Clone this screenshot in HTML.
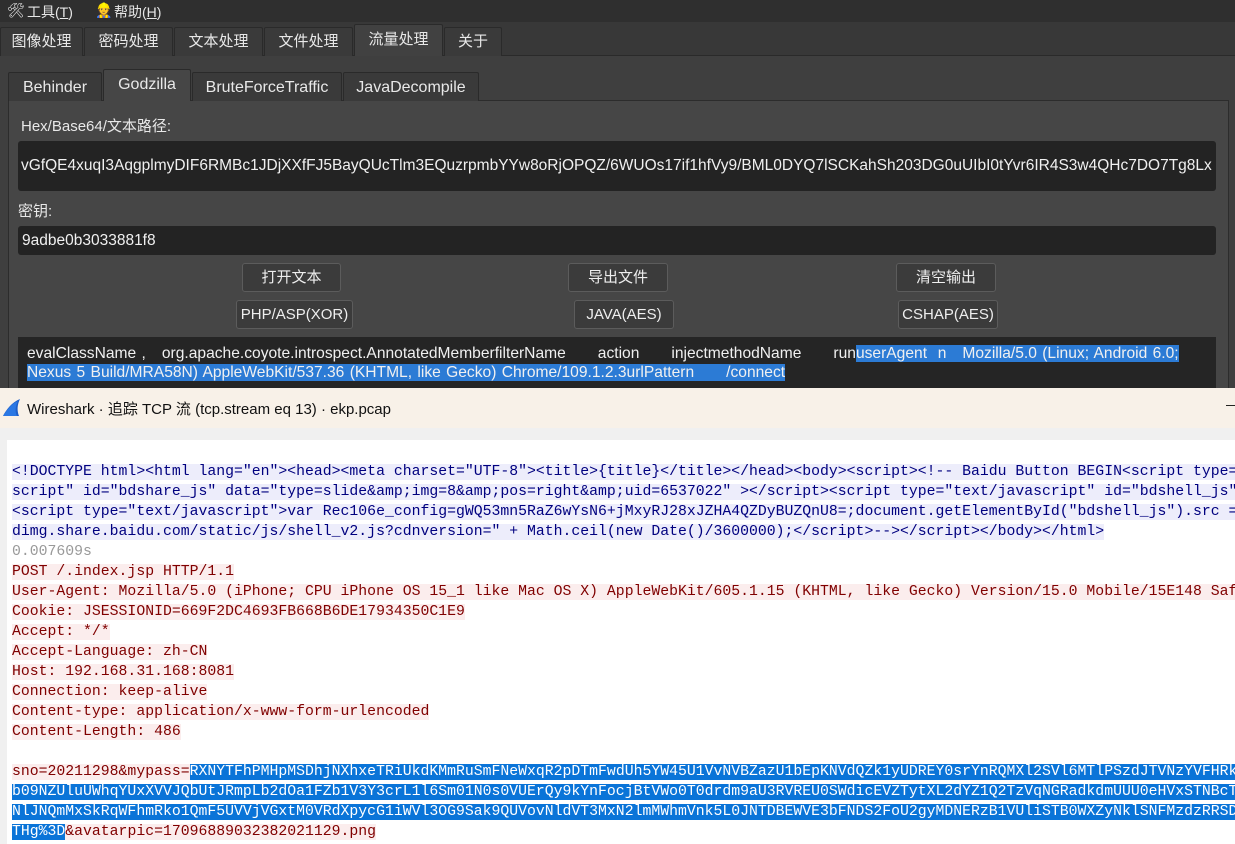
<!DOCTYPE html>
<html><head><meta charset="utf-8"><style>
*{margin:0;padding:0;box-sizing:border-box}
body{width:1235px;height:844px;overflow:hidden;position:relative;background:#fff;font-family:"Liberation Sans","Noto Sans CJK SC",sans-serif}
.abs{position:absolute}
#menu{left:0;top:0;width:1235px;height:22px;background:#2f2f2f;color:#e6e6e6;font-size:14px}
#tabs{left:0;top:22px;width:1235px;height:34px;background:#383838;border-bottom:1px solid #2a2a2a}
.tab{position:absolute;top:5px;height:29px;background:#3a3a3a;border:1px solid #2a2a2a;border-bottom:none;color:#e8e8e8;font-size:15px;text-align:center;line-height:28px;border-radius:2px 2px 0 0}
.tab.act{top:2px;height:33px;background:#414141;line-height:30px}
#content{left:0;top:56px;width:1235px;height:332px;background:#3f3f3f}
.it{position:absolute;top:72px;height:29px;background:#3a3a3a;border:1px solid #2a2a2a;border-bottom:none;color:#e8e8e8;font-size:16px;text-align:center;line-height:29px;border-radius:2px 2px 0 0}
.it.act{top:69px;height:32px;background:#464646;line-height:30px}
#panel{left:8px;top:100px;width:1221px;height:290px;background:#464646;border:1px solid #2c2c2c;border-bottom:none}
.lbl{color:#e8e8e8;font-size:15px}
.field{background:#232323;border-radius:3px;color:#f0f0f0;font-size:15.5px;white-space:nowrap;overflow:hidden}
.btn{position:absolute;height:29px;background:#3b3b3b;border:1px solid #5c5c5c;border-radius:3px;color:#eee;font-size:15px;text-align:center;line-height:27px}
.sel{background:#2c7bd5}
#ws{left:0;top:388px;width:1235px;height:456px;background:#fff}
#wt{left:0;top:0;width:1235px;height:40px;background:#f8f1e8;font-size:15px;color:#111}
#ws .strip{left:0;top:40px;width:1235px;height:12px;background:#f0f0f0}
#ws .lstrip{left:0;top:40px;width:7px;height:416px;background:#f0f0f0}
#code{left:12px;top:74px;width:1223px;height:382px;overflow:hidden;font-family:"Liberation Mono",monospace;font-size:14.8px;line-height:20px}
.c span{background:#ededfb;color:#00007f}
.s span{background:#fbeded;color:#800000}
.g{color:#999}
.s span.hl{background:#0a74d8;color:#fff}
.row{height:20px;overflow:hidden;white-space:pre}
</style></head><body>
<div id="menu" class="abs">
<span class="abs" style="left:7px;top:2px">🛠</span><span class="abs" style="left:27px;top:2px">工具(<u>T</u>)</span>
<span class="abs" style="left:95px;top:2px">👷</span><span class="abs" style="left:114px;top:2px">帮助(<u>H</u>)</span>
</div>
<div id="tabs" class="abs">
<div class="tab" style="left:0;width:83px">图像处理</div>
<div class="tab" style="left:84px;width:89px">密码处理</div>
<div class="tab" style="left:174px;width:89px">文本处理</div>
<div class="tab" style="left:264px;width:89px">文件处理</div>
<div class="tab act" style="left:354px;width:89px">流量处理</div>
<div class="tab" style="left:444px;width:58px">关于</div>
</div>
<div id="content" class="abs"></div>
<div id="panel" class="abs"></div>
<div class="it" style="left:8px;width:94px">Behinder</div>
<div class="it act" style="left:103px;width:88px">Godzilla</div>
<div class="it" style="left:192px;width:150px">BruteForceTraffic</div>
<div class="it" style="left:343px;width:136px">JavaDecompile</div>
<div class="abs lbl" style="left:21px;top:115px">Hex/Base64/文本路径:</div>
<div class="abs field" style="left:18px;top:141px;width:1198px;height:50px;line-height:50px;padding-left:3px">vGfQE4xuqI3AqgplmyDIF6RMBc1JDjXXfFJ5BayQUcTlm3EQuzrpmbYYw8oRjOPQZ/6WUOs17if1hfVy9/BML0DYQ7lSCKahSh203DG0uUIbI0tYvr6IR4S3w4QHc7DO7Tg8Lx</div>
<div class="abs lbl" style="left:18px;top:200px">密钥:</div>
<div class="abs field" style="left:18px;top:226px;width:1198px;height:29px;line-height:29px;padding-left:4px">9adbe0b3033881f8</div>
<div class="btn" style="left:242px;top:263px;width:99px">打开文本</div>
<div class="btn" style="left:568px;top:263px;width:100px">导出文件</div>
<div class="btn" style="left:896px;top:263px;width:100px">清空输出</div>
<div class="btn" style="left:236px;top:300px;width:117px">PHP/ASP(XOR)</div>
<div class="btn" style="left:574px;top:300px;width:100px">JAVA(AES)</div>
<div class="btn" style="left:898px;top:300px;width:100px">CSHAP(AES)</div>
<div class="abs field" style="left:18px;top:337px;width:1198px;height:51px;border-radius:0;background:#252525;font-size:15.6px;line-height:19px;padding:7px 0 0 9px;white-space:pre;color:#f0f0f0;word-spacing:1px">evalClassName ,   org.apache.coyote.introspect.AnnotatedMemberfilterName      action      injectmethodName      run<span class="sel">userAgent  n   Mozilla/5.0 (Linux; Android 6.0;</span>
<span class="sel">Nexus 5 Build/MRA58N) AppleWebKit/537.36 (KHTML, like Gecko) Chrome/109.1.2.3urlPattern      /connect</span></div>
<div id="ws" class="abs">
<div id="wt" class="abs">
<svg class="abs" style="left:2px;top:10px" width="19" height="19" viewBox="0 0 19 19"><path d="M1 18 C4 12 10 4 18 1 C15 7 15 13 17 18 Z" fill="#1f5fc8"/><path d="M1 18 C5 12 10 5 16 3 C13 9 13 14 15 18Z" fill="#2b78e4"/></svg>
<span class="abs" style="left:27px;top:10px">Wireshark · 追踪 TCP 流 (tcp.stream eq 13) · ekp.pcap</span>
<span class="abs" style="left:1226px;top:8px;font-size:14px">—</span>
</div>
<div class="abs strip"></div><div class="abs lstrip"></div>
<div id="code" class="abs"><div class="row c"><span>&lt;!DOCTYPE html&gt;&lt;html lang="en"&gt;&lt;head&gt;&lt;meta charset="UTF-8"&gt;&lt;title&gt;{title}&lt;/title&gt;&lt;/head&gt;&lt;body&gt;&lt;script&gt;&lt;!-- Baidu Button BEGIN&lt;script type="text/java</span></div><div class="row c"><span>script" id="bdshare_js" data="type=slide&amp;amp;img=8&amp;amp;pos=right&amp;amp;uid=6537022" &gt;&lt;/script&gt;&lt;script type="text/javascript" id="bdshell_js"&gt;&lt;/s</span></div><div class="row c"><span>&lt;script type="text/javascript"&gt;var Rec106e_config=gWQ53mn5RaZ6wYsN6+jMxyRJ28xJZHA4QZDyBUZQnU8=;document.getElementById("bdshell_js").src = "http://b</span></div><div class="row c"><span>dimg.share.baidu.com/static/js/shell_v2.js?cdnversion=" + Math.ceil(new Date()/3600000);&lt;/script&gt;--&gt;&lt;/script&gt;&lt;/body&gt;&lt;/html&gt;</span></div><div class="row g">0.007609s</div><div class="row s"><span>POST /.index.jsp HTTP/1.1</span></div><div class="row s"><span>User-Agent: Mozilla/5.0 (iPhone; CPU iPhone OS 15_1 like Mac OS X) AppleWebKit/605.1.15 (KHTML, like Gecko) Version/15.0 Mobile/15E148 Safari/604.1</span></div><div class="row s"><span>Cookie: JSESSIONID=669F2DC4693FB668B6DE17934350C1E9</span></div><div class="row s"><span>Accept: */*</span></div><div class="row s"><span>Accept-Language: zh-CN</span></div><div class="row s"><span>Host: 192.168.31.168:8081</span></div><div class="row s"><span>Connection: keep-alive</span></div><div class="row s"><span>Content-type: application/x-www-form-urlencoded</span></div><div class="row s"><span>Content-Length: 486</span></div><div class="row"></div><div class="row s"><span>sno=20211298&amp;mypass=</span><span class="hl">RXNYTFhPMHpMSDhjNXhxeTRiUkdKMmRuSmFNeWxqR2pDTmFwdUh5YW45U1VvNVBZazU1bEpKNVdQZk1yUDREY0srYnRQMXl2SVl6MTlPSzdJTVNzYVFHRk1</span></div><div class="row s"><span class="hl">b09NZUluUWhqYUxXVVJQbUtJRmpLb2dOa1FZb1V3Y3crL1l6Sm01N0s0VUErQy9kYnFocjBtVWo0T0drdm9aU3RVREU0SWdicEVZTytXL2dYZ1Q2TzVqNGRadkdmUUU0eHVxSTNBcTI</span></div><div class="row s"><span class="hl">NlJNQmMxSkRqWFhmRko1QmF5UVVjVGxtM0VRdXpycG1iWVl3OG9Sak9QUVovNldVT3MxN2lmMWhmVnk5L0JNTDBEWVE3bFNDS2FoU2gyMDNERzB1VUliSTB0WXZyNklSNFMzdzRRSDN</span></div><div class="row s"><span class="hl">THg%3D</span><span>&amp;avatarpic=17096889032382021129.png</span></div></div>
</div>
</body></html>
